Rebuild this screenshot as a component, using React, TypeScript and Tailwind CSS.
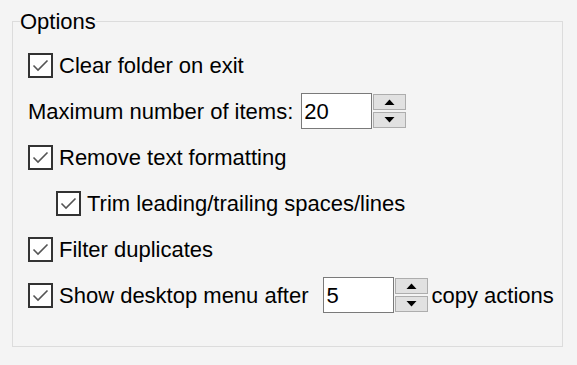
import type { ReactNode } from "react";

function Check({ label }: { label: string }) {
    return (
        <div className="flex items-center gap-[6px]">
            <span className="flex h-[25px] w-[25px] shrink-0 items-center justify-center border-2 border-[#333333] bg-white">
                <svg width="19" height="19" viewBox="0 0 19 19">
                    <path d="M2.5 9.5 L7 14 L16.5 4.5" fill="none" stroke="#555555" strokeWidth="1.6" />
                </svg>
            </span>
            <span>{label}</span>
        </div>
    );
}

function SpinBox({ value }: { value: string }) {
    return (
        <div className="flex items-stretch">
            <div className="flex h-[36px] w-[71px] items-center border border-[#7a7a7a] bg-white pl-[2px]">
                {value}
            </div>
            <div className="ml-[1px] flex w-[33px] flex-col gap-[2px] py-[1px]">
                <button className="flex h-[16px] items-center justify-center border border-[#adadad] bg-[#e1e1e1]">
                    <svg width="11" height="6" viewBox="0 0 11 6">
                        <path d="M0.5 6 L5.5 0.5 L10.5 6 Z" fill="#000" />
                    </svg>
                </button>
                <button className="flex h-[16px] items-center justify-center border border-[#adadad] bg-[#e1e1e1]">
                    <svg width="11" height="6" viewBox="0 0 11 6">
                        <path d="M0.5 0 L10.5 0 L5.5 5.5 Z" fill="#000" />
                    </svg>
                </button>
            </div>
        </div>
    );
}

function Row({ children, indent }: { children: ReactNode; indent?: boolean }) {
    return (
        <div className={indent ? "flex h-[46px] items-center pl-[28px]" : "flex h-[46px] items-center"}>
            {children}
        </div>
    );
}

export default function App() {
    return (
        <div
            className="h-[365px] w-[577px] overflow-hidden bg-[#f4f4f4] pt-[8px] text-[22px] text-black"
            style={{ fontFamily: '"Liberation Sans", Arial, sans-serif' }}
        >
            <fieldset className="ml-[12px] w-[551px] border border-[#dcdcdc] px-[7px] pt-[7px] pb-[28px]">
                <legend className="leading-[27px]">Options</legend>

                <div className="flex flex-col pl-[8px]">
                    <Row>
                        <Check label="Clear folder on exit" />
                    </Row>

                    <Row>
                        <span className="mr-[8px]">Maximum number of items:</span>
                        <SpinBox value="20" />
                    </Row>

                    <Row>
                        <Check label="Remove text formatting" />
                    </Row>

                    <Row indent>
                        <Check label="Trim leading/trailing spaces/lines" />
                    </Row>

                    <Row>
                        <Check label="Filter duplicates" />
                    </Row>

                    <Row>
                        <Check label="Show desktop menu after" />
                        <div className="ml-[15px]">
                            <SpinBox value="5" />
                        </div>
                        <span className="ml-[3px]">copy actions</span>
                    </Row>
                </div>
            </fieldset>
        </div>
    );
}
